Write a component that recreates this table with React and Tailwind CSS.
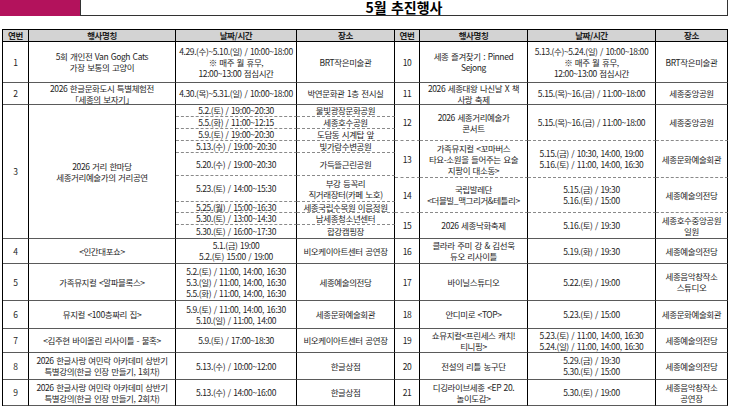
import React from "react";
import clsx from "clsx";

// 5월 추진행사 표: 왼쪽(1~9), 오른쪽(10~21) 두 개의 그리드로 나눔

const leftRows = [
  { no: "1", name: "5회 개인전 Van Gogh Cats\n가장 보통의 고양이", date: "4.29.(수)~5.10.(일) / 10:00~18:00\n※ 매주 월 휴무,\n12:00~13:00 점심시간", place: "BRT작은미술관" },
  { no: "2", name: "2026 한글문화도시 특별체험전\n「세종의 보자기」", date: "4.30.(목)~5.31.(일) / 10:00~18:00", place: "박연문화관 1층 전시실" },
];

const streetShows = [
  { date: "5.2.(토) / 19:00~20:30", place: "물빛광장문화공원" },
  { date: "5.5.(화) / 11:00~12:15", place: "세종호수공원" },
  { date: "5.9.(토) / 19:00~20:30", place: "도담동 시계탑 앞" },
  { date: "5.13.(수) / 19:00~20:30", place: "빛가람수변공원" },
  { date: "5.20.(수) / 19:00~20:30", place: "가득뜰근린공원" },
  { date: "5.23.(토) / 14:00~15:30", place: "부강 등꼭리\n직거래장터(카페 노호)" },
  { date: "5.25.(월) / 15:00~16:30", place: "세종국립수목원 이음정원" },
  { date: "5.30.(토) / 13:00~14:30", place: "남세종청소년센터" },
  { date: "5.30.(토) / 16:00~17:30", place: "합강캠핑장", last: true },
];

const leftRest = [
  { no: "4", name: "<인간대포쇼>", date: "5.1.(금) 19:00\n5.2.(토) 15:00 / 19:00", place: "비오케이아트센터 공연장" },
  { no: "5", name: "가족뮤지컬 <알파블록스>", date: "5.2.(토) / 11:00, 14:00, 16:30\n5.3.(일) / 11:00, 14:00, 16:30\n5.5.(화) / 11:00, 14:00, 16:30", place: "세종예술의전당" },
  { no: "6", name: "뮤지컬 <100층짜리 집>", date: "5.9.(토) / 11:00, 14:00, 16:30\n5.10.(일) / 11:00, 14:00", place: "세종문화예술회관" },
  { no: "7", name: "<김주현 바이올린 리사이틀 - 불혹>", date: "5.9.(토) / 17:00~18:30", place: "비오케이아트센터 공연장" },
  { no: "8", name: "2026 한글사랑 여민락 아카데미 상반기\n특별강의(한글 인장 만들기, 1회차)", date: "5.13.(수) / 10:00~12:00", place: "한글상점" },
  { no: "9", name: "2026 한글사랑 여민락 아카데미 상반기\n특별강의(한글 인장 만들기, 2회차)", date: "5.13.(수) / 14:00~16:00", place: "한글상점" },
];

const rightRows = [
  { no: "10", name: "세종 즐겨찾기 : Pinned\nSejong", date: "5.13.(수)~5.24.(일) / 10:00~18:00\n※ 매주 월 휴무,\n12:00~13:00 점심시간", place: "BRT작은미술관" },
  { no: "11", name: "2026 세종대왕 나신날 X 책\n사랑 축제", date: "5.15.(목)~16.(금) / 11:00~18:00", place: "세종중앙공원" },
  { no: "12", name: "2026 세종거리예술가\n콘서트", date: "5.15.(목)~16.(금) / 11:00~18:00", place: "세종중앙공원", dashed: true },
  { no: "13", name: "가족뮤지컬 <꼬마버스\n타요-소원을 들어주는 요술\n지팡이 대소동>", date: "5.15.(금) / 10:30, 14:00, 19:00\n5.16.(토) / 11:00, 14:00, 16:30", place: "세종문화예술회관", dashed: true },
  { no: "14", name: "국립발레단\n<더블빌_맥그리거&테틀리>", date: "5.15.(금) / 19:30\n5.16.(토) / 15:00", place: "세종예술의전당", dashed: true },
  { no: "15", name: "2026 세종낙화축제", date: "5.16.(토) / 19:30", place: "세종호수중앙공원\n일원" },
  { no: "16", name: "클라라 주미 강 & 김선욱\n듀오 리사이틀", date: "5.19.(화) / 19:30", place: "세종예술의전당" },
  { no: "17", name: "바이닐스튜디오", date: "5.22.(토) / 19:00", place: "세종음악창작소\n스튜디오" },
  { no: "18", name: "안디미로 <TOP>", date: "5.23.(토) / 15:00", place: "세종문화예술회관" },
  { no: "19", name: "쇼뮤지컬<프린세스 캐치!\n티니핑>", date: "5.23.(토) / 11:00, 14:00, 16:30\n5.24.(일) / 11:00, 14:00, 16:30", place: "세종예술의전당" },
  { no: "20", name: "전설의 리틀 농구단", date: "5.29.(금) / 19:30\n5.30.(토) / 15:00", place: "세종예술의전당" },
  { no: "21", name: "디깅라이브세종 <EP 20.\n놀이도감>", date: "5.30.(토) / 19:00", place: "세종음악창작소\n공연장" },
];

const headers = ["연번", "행사명칭", "날짜/시간", "장소"];

function Cell({ text, dashed, className }) {
  return (
    <div
      className={clsx(
        "flex flex-col items-center justify-center text-center overflow-hidden whitespace-nowrap border-r border-b border-black border-b-[#5a5a5a] leading-[11px]",
        dashed && "[border-bottom-style:dashed] border-b-[#8a8a8a]",
        className
      )}
    >
      {text.split("\n").map((line, i) => (
        <div key={i}>{line}</div>
      ))}
    </div>
  );
}

function Header() {
  return headers.map((h) => (
    <Cell key={h} text={h} className="bg-[#d3d3d3] font-bold border-b-black" />
  ));
}

function Row({ row }) {
  return (
    <>
      <Cell text={row.no} dashed={row.dashed} />
      <Cell text={row.name} dashed={row.dashed} />
      <Cell text={row.date} dashed={row.dashed} />
      <Cell text={row.place} dashed={row.dashed} />
    </>
  );
}

export default function App() {
  return (
    <div className="w-[730px] h-[406px] bg-white overflow-hidden text-[#1e1e1e] text-[8.5px] tracking-[-0.4px] [word-spacing:1px] font-['Noto_Sans_CJK_KR','Noto_Sans',sans-serif]">
      {/* title bar */}
      <div className="flex h-[16px] pr-[2px]">
        <div className="w-[80px] bg-[#b3125c]" />
        <div className="flex-1 border-l border-r border-b border-[#333] bg-white text-center">
          <div className="text-[14px] font-bold leading-[15px] tracking-[0px] text-black">5월 추진행사</div>
        </div>
      </div>

      <div className="flex mt-[13px] pl-[2px]">
        {/* left */}
        <div className="grid grid-cols-[26px_147px_121px_98px] grid-rows-[12px_41px_22px_12px_12px_12px_12px_23px_26px_11px_12px_14px_25px_37px_28px_24px_27px_26px] border-l border-t border-black">
          <Header />
          {leftRows.map((r) => (
            <Row key={r.no} row={r} />
          ))}
          <Cell text="3" className="row-span-9" />
          <Cell text={"2026 거리 한마당\n세종거리예술가의 거리공연"} className="row-span-9" />
          {streetShows.map((s, i) => (
            <React.Fragment key={i}>
              <Cell text={s.date} dashed={!s.last} />
              <Cell text={s.place} dashed={!s.last} />
            </React.Fragment>
          ))}
          {leftRest.map((r) => (
            <Row key={r.no} row={r} />
          ))}
        </div>

        {/* right */}
        <div className="grid grid-cols-[25px_108px_128px_72px] grid-rows-[12px_41px_22px_36px_37px_35px_26px_25px_37px_28px_24px_27px_26px] border-t border-black">
          <Header />
          {rightRows.map((r) => (
            <Row key={r.no} row={r} />
          ))}
        </div>
      </div>
    </div>
  );
}
